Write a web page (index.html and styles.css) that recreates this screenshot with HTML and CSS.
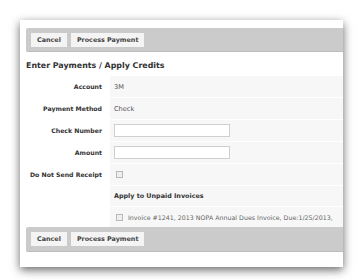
FILE: index.html
```html
<!DOCTYPE html>
<html>
<head>
<meta charset="UTF-8">
<link rel="stylesheet" href="styles.css">
</head>
<body>
<div class="shot">
  <div class="card">
    <div class="toolbar">
      <button class="btn">Cancel</button>
      <button class="btn">Process Payment</button>
    </div>

    <h2 class="title">Enter Payments / Apply Credits</h2>

    <div class="form">
      <div class="label">Account</div>
      <div class="value">3M</div>

      <div class="label">Payment Method</div>
      <div class="value">Check</div>

      <div class="label">Check Number</div>
      <div class="value"><input class="field" type="text"></div>

      <div class="label">Amount</div>
      <div class="value"><input class="field" type="text"></div>

      <div class="label">Do Not Send Receipt</div>
      <div class="value"><input class="box" type="checkbox"></div>

      <div class="label"></div>
      <div class="value heading">Apply to Unpaid Invoices</div>

      <div class="label"></div>
      <div class="value invoice"><input class="box" type="checkbox"><span>Invoice #1241, 2013 NOPA Annual Dues Invoice, Due:1/25/2013,</span></div>
    </div>

    <div class="toolbar bottom">
      <button class="btn">Cancel</button>
      <button class="btn">Process Payment</button>
    </div>
  </div>
</div>
</body>
</html>
```

FILE: styles.css
```css
body {
  margin: 0;
  background: #fff;
  font-family: "DejaVu Sans", Verdana, sans-serif;
}

.shot {
  padding: 20px;
}

.card {
  width: 317px;
  height: 232px;
  padding: 8px 0 7px 6px;
  background: #fff;
  overflow: hidden;
  box-shadow: 0 3px 9px rgba(0, 0, 0, 0.6);
}

.toolbar {
  width: 340px;
  height: 23px;
  display: flex;
  align-items: center;
  gap: 4px;
  padding-left: 5px;
  background: #cbcbcb;
  border-bottom: 1px solid #bdbdbd;
  border-radius: 2px 0 0 2px;
}

.toolbar.bottom {
  height: 24px;
}

.btn {
  height: 14px;
  padding: 0 6px;
  border: none;
  background: #f4f4f4;
  color: #444;
  font-family: inherit;
  font-size: 6.4px;
  font-weight: bold;
  line-height: 14px;
}

.title {
  margin: 0;
  height: 23px;
  line-height: 28px;
  font-size: 7.9px;
  font-weight: bold;
  color: #333;
}

.form {
  display: grid;
  grid-template-columns: 84px 240px;
  grid-template-rows: 22px 22px 22px 22px 22px 21px 21px;
}

.label {
  display: flex;
  align-items: center;
  justify-content: flex-end;
  padding-right: 8px;
  font-size: 6.2px;
  font-weight: bold;
  color: #333;
  background: #fff;
}

.value {
  display: flex;
  align-items: center;
  padding-left: 4px;
  background: #f7f7f7;
  border-top: 1px solid #fff;
  font-size: 6.6px;
  color: #555;
  white-space: nowrap;
}

.value.heading {
  font-weight: bold;
  font-size: 6.4px;
  color: #333;
}

.value.invoice {
  color: #666;
  font-size: 6.3px;
}

.field {
  width: 116px;
  height: 13px;
  margin: 0;
  box-sizing: border-box;
  border: 1px solid #cfcfcf;
  background: #fff;
}

.box {
  -webkit-appearance: none;
  appearance: none;
  flex-shrink: 0;
  width: 7px;
  height: 7px;
  margin: 0 5px 0 2px;
  box-sizing: border-box;
  border: 1px solid #b8b8b8;
  background: #eee;
}
```
